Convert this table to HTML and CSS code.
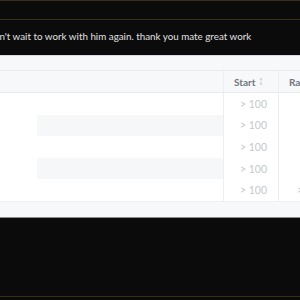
FILE: index.html
```html
<!DOCTYPE html>
<html>
<head>
<meta charset="utf-8">
<link rel="stylesheet" href="styles.css">
</head>
<body>
<div class="feed">
  <div class="item item-top"></div>
  <div class="item item-main">
    <p class="comment">Can't wait to work with him again. thank you mate great work</p>
    <div class="panel">
      <div class="grid">
        <div class="row head">
          <div class="cell"></div>
          <div class="cell"></div>
          <div class="cell col-start th">Start <svg class="sort" width="4" height="9" viewBox="0 0 4 9"><path d="M2 0.5 L3.6 2.8 H0.4 Z M2 8.5 L3.6 6.2 H0.4 Z M1.6 2.8 H2.4 V6.2 H1.6 Z" fill="#cfd3d8"/></svg></div>
          <div class="cell col-rate th">Rating</div>
        </div>
        <div class="row">
          <div class="cell"></div><div class="cell main"></div>
          <div class="cell col-start num">&gt; 100</div><div class="cell col-rate"></div>
        </div>
        <div class="row striped">
          <div class="cell"></div><div class="cell main"></div>
          <div class="cell col-start num">&gt; 100</div><div class="cell col-rate"></div>
        </div>
        <div class="row">
          <div class="cell"></div><div class="cell main"></div>
          <div class="cell col-start num">&gt; 100</div><div class="cell col-rate"></div>
        </div>
        <div class="row striped">
          <div class="cell"></div><div class="cell main"></div>
          <div class="cell col-start num">&gt; 100</div><div class="cell col-rate"></div>
        </div>
        <div class="row">
          <div class="cell"></div><div class="cell main"></div>
          <div class="cell col-start num">&gt; 100</div><div class="cell col-rate num-left">&gt; 100</div>
        </div>
      </div>
      <div class="foot"></div>
    </div>
  </div>
</div>
</body>
</html>
```

FILE: styles.css
```css
html, body {
  margin: 0;
  padding: 0;
}
body {
  width: 300px;
  height: 300px;
  overflow: hidden;
  background: #0a0a0a;
  font-family: Lato, "Open Sans", sans-serif;
}
.feed {
  border-top: 1px solid #393017;
}
.item {
  border-bottom: 1px solid #393017;
  background: #0b0b0b;
}
.item-top {
  height: 18px;
}
.item-main {
  padding-bottom: 78px;
}
.comment {
  margin: 0 0 0 -12px;
  padding: 9px 0 12px;
  line-height: 14px;
  font-size: 9.8px;
  color: #e0e0e0;
  white-space: nowrap;
}
.panel {
  background: #f7f8fa;
  border-top: 1px solid #d9dce1;
  border-bottom: 1px solid #8c8c8c;
  padding-top: 14px;
  overflow: hidden;
}
.grid {
  width: 400px;
}
.row {
  display: grid;
  grid-template-columns: 37px 186px 55px 122px;
  height: 21.6px;
  background: #ffffff;
}
.row.head {
  height: 23px;
  background: #f7f8fa;
  border-top: 1px solid #e8ebef;
  border-bottom: 1px solid #e8ebef;
  box-sizing: border-box;
}
.cell {
  box-sizing: border-box;
  display: flex;
  align-items: center;
  font-size: 10.5px;
  white-space: nowrap;
  overflow: hidden;
}
.striped .main {
  background: #f6f7f9;
}
.col-start, .col-rate {
  border-left: 1px solid #eceef2;
}
.th {
  font-weight: 700;
  color: #72767d;
  padding-left: 10px;
  font-size: 10px;
  gap: 3px;
}
.sort {
  display: block;
}
.num {
  justify-content: flex-end;
  padding-right: 11px;
  color: #c6c8cc;
}
.num-left {
  padding-left: 18px;
  color: #c6c8cc;
}
.foot {
  height: 15px;
  border-top: 1px solid #eef0f3;
  background: #f7f8fa;
}
```
